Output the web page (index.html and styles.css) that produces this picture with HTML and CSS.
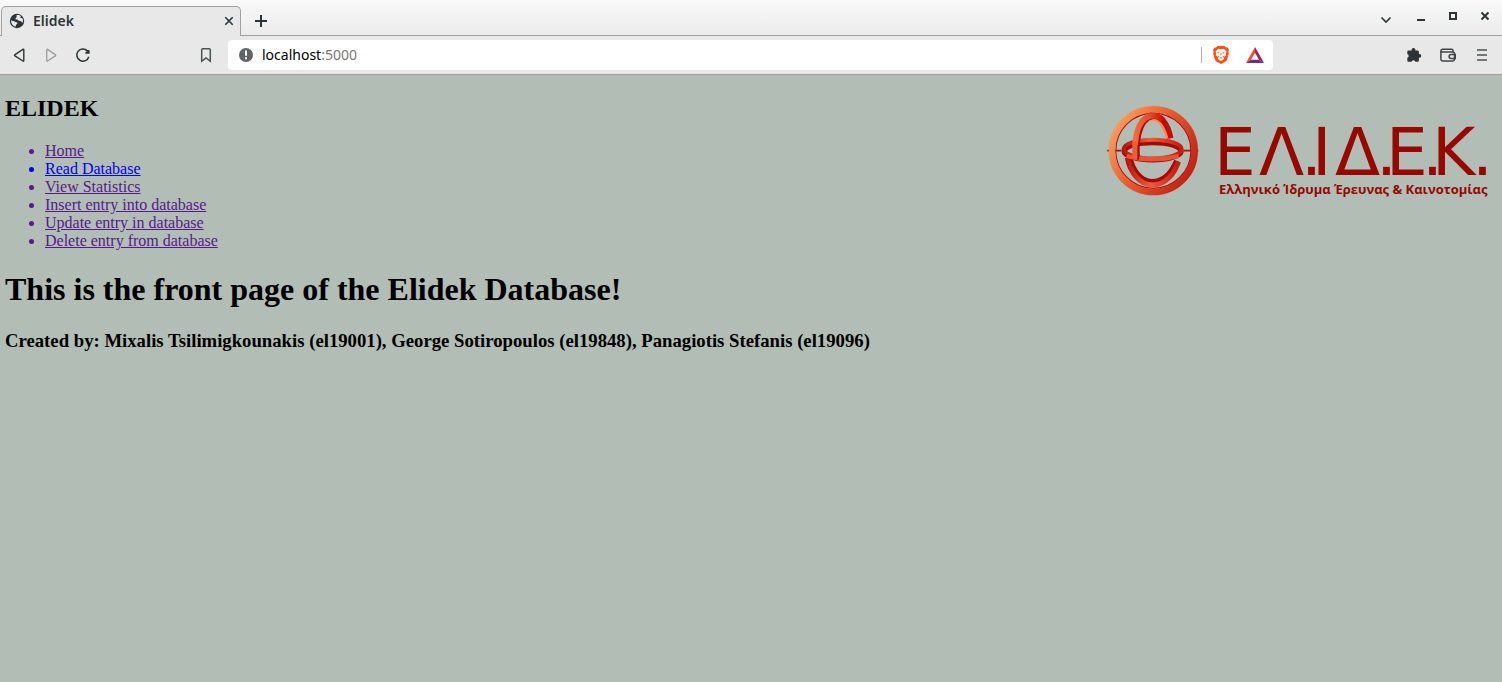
FILE: index.html
```html
<!DOCTYPE html>
<html lang="en">
<head>
<meta charset="utf-8">
<title>Elidek</title>
<link rel="stylesheet" href="styles.css">
</head>
<body>
<div class="browser">
  <div class="tabstrip">
    <div class="tab">
      <svg class="icon" width="16" height="16" viewBox="0 0 16 16"><circle cx="8" cy="8" r="7.2" fill="#2e3436"/><path d="M2.2 7.2c1.300 1 2.600.4 3.600 1.400 1 .8 2.600.6 2.600 1.700 0 1-1.300 1-1.500 2.200l-.5 1.200C3.600 12.800 1.700 10 2.200 7.200zM7.500 2.200c1-.5 3.500-.2 4.600 1l-1 .9.900 1 1.700.4c.4 1.400.4 3-.2 4.300-.9-.5-1.200-1.500-2.300-1.700-1.500-.3-2.600-.4-2.600-1.500L6.400 6.200c-.5-.9.700-1.300 1.200-2z" fill="#e8e8e8"/></svg>
      <span class="tab-title">Elidek</span>
      <button class="tool tab-close" aria-label="Close tab"><svg width="10" height="10" viewBox="0 0 10 10"><path d="M1.300 1.300l7.400 7.400M8.700 1.300L1.300 8.700" stroke="#2e3436" stroke-width="1.600"/></svg></button>
    </div>
    <button class="tool new-tab" aria-label="New tab"><svg width="12" height="12" viewBox="0 0 12 12"><path d="M6 0v12M0 6h12" stroke="#2e3436" stroke-width="2"/></svg></button>
    <div class="window-controls">
      <button class="tool tab-search" aria-label="Search tabs"><svg width="12" height="8" viewBox="0 0 12 8"><path d="M1.500 1.500L6 6l4.500-4.500" fill="none" stroke="#2e3436" stroke-width="1.600"/></svg></button>
      <button class="tool" aria-label="Minimize"><svg width="10" height="10" viewBox="0 0 10 10"><path d="M1 9h8" stroke="#2e3436" stroke-width="2"/></svg></button>
      <button class="tool" aria-label="Maximize"><svg width="10" height="10" viewBox="0 0 10 10"><path d="M2 2h6v6H2z" fill="none" stroke="#2e3436" stroke-width="2"/></svg></button>
      <button class="tool" aria-label="Close window"><svg width="10" height="10" viewBox="0 0 10 10"><path d="M1.500 1.500l7 7M8.500 1.500l-7 7" stroke="#2e3436" stroke-width="2"/></svg></button>
    </div>
  </div>
  <div class="toolbar">
    <div class="nav-buttons">
      <button class="tool" aria-label="Back"><svg width="16" height="16" viewBox="0 0 16 16"><path d="M12.800 2.800v10.800q0 .9-.9.400L4 8.900q-.9-.7 0-1.300l7.900-5.200q.9-.5.900.4z" fill="none" stroke="#2e3436" stroke-width="1.400"/></svg></button>
      <button class="tool" aria-label="Forward" disabled><svg width="16" height="16" viewBox="0 0 16 16"><path d="M3.700 2.800v10.800q0 .9.900.4l7.700-5.100q.9-.7 0-1.300L4.600 2.400q-.9-.5-.9.400z" fill="none" stroke="#9c9e9e" stroke-width="1.300"/></svg></button>
      <button class="tool" aria-label="Reload"><svg width="16" height="16" viewBox="0 0 16 16"><path d="M13.800 9.700A6.100 6.100 0 1 1 12.400 3.900" fill="none" stroke="#2e3436" stroke-width="1.500"/><path d="M10.300 2.200q1.200 1 3.300.7.900 0 1 .9l.2 2.200q0 .8-.8.800h-3.500l-.6-.7 2-1.600-1.800-1.700z" fill="#2e3436"/></svg></button>
    </div>
    <button class="tool bookmark" aria-label="Bookmark"><svg width="12" height="16" viewBox="0 0 12 16"><path d="M1.700 2.700q0-1 1-1h6.600q1 0 1 1v11.600L6 11l-4.300 3.300z" fill="none" stroke="#4c5153" stroke-width="1.500"/></svg></button>
    <div class="address">
      <svg class="icon" width="16" height="16" viewBox="0 0 16 16"><circle cx="8" cy="8" r="7" fill="#5f6368"/><path d="M8 3.500v5.300M8 10.300v2" stroke="#fff" stroke-width="2"/></svg>
      <a class="url" href="#">localhost<span class="port">:5000</span></a>
      <span class="divider"></span>
      <button class="tool shield" aria-label="Brave Shields"><svg width="16" height="18" viewBox="0 0 16 18"><path d="M4.500 0h7l1.600 1.600 1.500-.1L16 4l-.6 1.800.4 1.700-1.500 5.600q-.4 1.400-1.600 2.300L8 18l-4.700-2.600q-1.200-.9-1.600-2.300L.200 7.500l.4-1.700L0 4l1.400-2.500 1.500.1z" fill="#fb4f14"/><path d="M5 2.700L8 3.300l3-.6 2.500 2.900-.7 1.500.4 2-2.400 2.400.3 1.600L8 15l-3.100-1.900.3-1.600-2.400-2.400.4-2-.7-1.500z" fill="#fff"/><path d="M4.200 6l2.600.4-1.400 1.100zM11.800 6l-2.600.4 1.400 1.100zM4.600 9.500l1.800 1-.6 1.200zM11.400 9.500l-1.800 1 .6 1.200zM7.600 7h.8v2.600h-.8zM6.500 10.800L8 11.600l1.500-.8L8 13z" fill="#fb4f14"/></svg></button>
      <button class="tool rewards" aria-label="Brave Rewards"><svg width="18" height="16" viewBox="0 0 18 16"><path d="M9 0L0 16l5-3.300L9 5.700z" fill="#ff4724"/><path d="M9 0l9 16-5-3.300L9 5.700z" fill="#9e1f63"/><path d="M0 16h18l-5-3.300H5z" fill="#662d91"/></svg></button>
    </div>
    <div class="extras">
      <button class="tool" aria-label="Extensions"><svg width="16" height="16" viewBox="0 0 16 16"><path d="M1.300 4.800q0-1.300 1.300-1.300h3.100a1.900 1.900 0 1 1 3.600 0h2.300q1.300 0 1.300 1.300v2.200a1.900 1.900 0 1 1 0 3.700v2.800q0 1.300-1.300 1.300H9.400a2 2 0 0 0-3.900 0H2.600q-1.300 0-1.300-1.300v-2.700a2 2 0 0 0 0-3.800z" fill="#2e3436"/></svg></button>
      <button class="tool" aria-label="Wallet"><svg width="16" height="16" viewBox="0 0 16 16"><path d="M.9 4v8.200q0 1.700 1.700 1.700h10.200q1.700 0 1.700-1.700V6.400q0-1.500-1.700-1.500H2.400Q.9 4.900.9 3.700t1.500-1.400h9.300q1.300 0 1.300 1.300v1.200M15.300 7.500h-4.200a2 2 0 0 0 0 4h4.200z" fill="none" stroke="#3f4547" stroke-width="1.500"/></svg></button>
      <button class="tool" aria-label="Menu"><svg width="16" height="16" viewBox="0 0 16 16"><path d="M3 3h10M3 8h10M3 13h10" stroke="#4c5153" stroke-width="1.600"/></svg></button>
    </div>
  </div>
</div>
<main class="page">
  <header class="masthead">
    <div>
      <h2>ELIDEK</h2>
      <nav>
        <ul>
          <li><a href="#">Home</a></li>
          <li class="unvisited"><a href="#">Read Database</a></li>
          <li><a href="#">View Statistics</a></li>
          <li><a href="#">Insert entry into database</a></li>
          <li><a href="#">Update entry in database</a></li>
          <li><a href="#">Delete entry from database</a></li>
        </ul>
      </nav>
    </div>
    <svg class="logo" width="397" height="110" viewBox="0 0 397 110">
      <defs>
        <linearGradient id="ring" x1="0" y1=".2" x2="1" y2=".8"><stop offset="0" stop-color="#f9a05c"/><stop offset=".45" stop-color="#e65c33"/><stop offset="1" stop-color="#c01c12"/></linearGradient>
        <linearGradient id="hoop" x1="0" y1="0" x2="1" y2="0"><stop offset="0" stop-color="#ef6d3e"/><stop offset=".55" stop-color="#e04a28"/><stop offset="1" stop-color="#c90d06"/></linearGradient>
        <linearGradient id="band" x1="0" y1="0" x2="1" y2="0"><stop offset="0" stop-color="#b9160d"/><stop offset=".45" stop-color="#ec5e38"/><stop offset="1" stop-color="#c81a0e"/></linearGradient>
      </defs>
      <g transform="scale(.3333)" fill="none">
        <path d="M22 167h42M252 167h43" stroke="#98150e" stroke-width="5"/>
        <circle cx="160" cy="167" r="113" stroke="#b80c06" stroke-width="4"/>
        <circle cx="160" cy="167" r="124" stroke="url(#ring)" stroke-width="20"/>
        <path d="M88 186C94 224 120 262 156 262c39 0 62-31 76-64" stroke="#a60904" stroke-width="20"/>
        <path d="M82 188c7 44 38 82 76 82 38 0 66-34 77-70" stroke="url(#band)" stroke-width="15"/>
        <path d="M150 62c36 0 54 31 61 68" stroke="#c70c05" stroke-width="19"/>
        <path d="M152 73c26 0 38 19 50 57" stroke="#f38b57" stroke-width="7"/>
        <ellipse cx="158" cy="168" rx="85" ry="26" stroke="#a90803" stroke-width="17"/>
        <ellipse cx="158" cy="162" rx="87" ry="28" stroke="url(#band)" stroke-width="12"/>
        <path d="M116 193c-6-51 4-116 42-125 16-2 28 5 36 18" stroke="#b80802" stroke-width="9"/>
        <path d="M107 190c-6-58 5-118 44-127 17-3 30 3 39 14" stroke="url(#hoop)" stroke-width="17"/>
        <path d="M80 183q74 21 156 0" stroke="#e65534" stroke-width="12"/>
        <path d="M114 150v44" stroke="#b40d06" stroke-width="7"/>
        <path d="M105 140v52" stroke="#e96038" stroke-width="14"/>
      </g>
      <text class="logo-name" y="80" x="114 159 201 212 235 276 286 322 332 372">ΕΛ.ΙΔ.Ε.Κ.</text>
      <text class="logo-caption" x="119" y="99">Ελληνικό Ίδρυμα Έρευνας &amp; Καινοτομίας</text>
    </svg>
  </header>
  <h1>This is the front page of the Elidek Database!</h1>
  <h3>Created by: Mixalis Tsilimigkounakis (el19001), George Sotiropoulos (el19848), Panagiotis Stefanis (el19096)</h3>
</main>
</body>
</html>
```
FILE: styles.css
```css
* { box-sizing: border-box; }
body {
  margin: 0;
  min-height: 100vh;
  background: #b2beb5;
  color: #000;
  font-family: "Liberation Serif", serif;
  font-size: 16px;
  line-height: 18px;
}
svg { display: block; flex: none; }
.browser {
  background: #e8e8e8;
  border-bottom: 1px solid #9d9f9d;
  font-family: "Noto Sans", "Open Sans", sans-serif;
  font-size: 14px;
}
.tool {
  display: flex;
  align-items: center;
  justify-content: center;
  width: 16px;
  height: 16px;
  padding: 0;
  border: 0;
  background: none;
}
.tabstrip {
  display: flex;
  align-items: center;
  height: 36px;
  background: linear-gradient(#f9f9f9, #ebebeb);
  box-shadow: inset 0 -1px #a0a0a0;
}
.tab {
  display: flex;
  align-items: center;
  align-self: flex-end;
  gap: 8px;
  width: 240px;
  height: 30px;
  margin-left: 1px;
  padding: 0 3px 1px 7px;
  border: 1px solid #a0a0a0;
  border-bottom: 0;
  border-radius: 5px 5px 0 0;
  background: #e8e8e8;
}
.tab-title { flex: 1; color: #2e3436; font-size: 14px; font-weight: 600; }
.new-tab { margin: 6px 0 0 12px; }
.window-controls {
  display: flex;
  gap: 16px;
  margin-left: auto;
  padding-right: 9px;
}
.tab-search { margin: 4px 3px 0 0; }
.toolbar {
  display: flex;
  align-items: center;
  height: 38px;
  padding: 0 12px 0 11px;
}
.nav-buttons { display: flex; gap: 16px; }
.bookmark { margin-left: 107px; }
.address {
  display: flex;
  align-items: center;
  flex: 1;
  height: 30px;
  margin-left: 14px;
  padding: 0 9px 0 10px;
  border-radius: 4px;
  background: #fff;
}
.url { flex: 1; margin-left: 8px; color: #000; text-decoration: none; }
.port { color: #777; }
.divider { width: 1px; height: 16px; background: #b5b5b5; }
.shield { margin-left: 11px; }
.rewards { width: 18px; margin-left: 17px; }
.extras { display: flex; gap: 18px; margin-left: 133px; }
.page { padding: 1px 5px; }
.masthead { display: flex; justify-content: space-between; align-items: flex-start; }
h1, h2, h3 { font-weight: bold; }
h2 { margin: 19px 0 20px; font-size: 24px; line-height: 27px; }
h1 { margin: 21px 0; font-size: 32px; line-height: 37px; }
h3 { margin: 22px 0; font-size: 1.17em; line-height: 21px; }
ul { margin: 0; padding-left: 40px; }
li { color: #551a8b; }
li a { color: inherit; }
.unvisited { color: #0000ee; }
.logo { margin-top: 19px; }
.logo-name { fill: #960800; font-family: "DejaVu Sans", sans-serif; font-size: 66px; }
.logo-caption { fill: #960800; font-family: "Open Sans", sans-serif; font-size: 13px; font-weight: 700; }
```
